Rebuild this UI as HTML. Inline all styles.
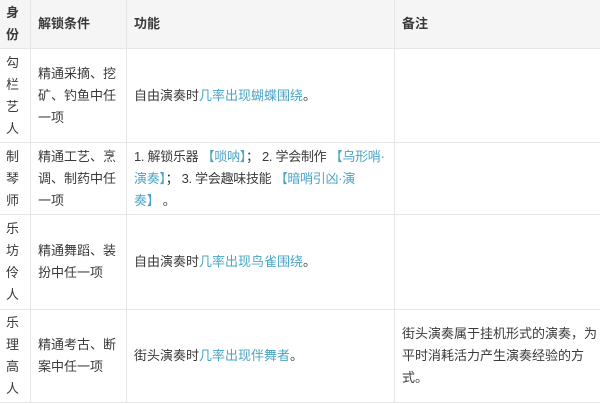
<!DOCTYPE html>
<html><head><meta charset="utf-8"><style>
body{margin:0;width:600px;height:404px;background:#fff;overflow:hidden;font-family:"Liberation Sans","Noto Sans CJK SC",sans-serif;font-size:13px;color:#3a3a3a;line-height:22px}
.c{position:absolute;display:flex;align-items:center;box-sizing:border-box;padding:0 7px;border-right:1px solid #e6e6e6;border-bottom:1px solid #e6e6e6}
.h{background:#f5f5f5;font-weight:bold}
.l{color:#4ba5c6}
.n{white-space:nowrap}
</style></head><body>
<div class="c h" style="left:0;top:0;width:31px;height:49px;padding:0 6px">身份</div>
<div class="c h" style="left:31px;top:0;width:96px;height:49px">解锁条件</div>
<div class="c h" style="left:127px;top:0;width:268px;height:49px">功能</div>
<div class="c h" style="left:395px;top:0;width:205px;height:49px;border-right:0">备注</div>

<div class="c" style="left:0;top:49px;width:31px;height:94px;padding:0 6px">勾栏艺人</div>
<div class="c" style="left:31px;top:49px;width:96px;height:94px">精通采摘、挖矿、钓鱼中任一项</div>
<div class="c" style="left:127px;top:49px;width:268px;height:94px">自由演奏时<span class="l">几率出现蝴蝶围绕</span>。</div>
<div class="c" style="left:395px;top:49px;width:205px;height:94px;border-right:0"></div>

<div class="c" style="left:0;top:143px;width:31px;height:72px;padding:0 6px">制琴师</div>
<div class="c" style="left:31px;top:143px;width:96px;height:72px">精通工艺、烹调、制药中任一项</div>
<div class="c n" style="left:127px;top:143px;width:268px;height:72px;letter-spacing:-0.3px"><div>1. 解锁乐器 <span class="l">【唢呐】</span>； 2. 学会制作 <span class="l">【乌形哨·</span><br><span class="l">演奏】</span>； 3. 学会趣味技能 <span class="l">【暗哨引凶·演</span><br><span class="l">奏】</span> 。</div></div>
<div class="c" style="left:395px;top:143px;width:205px;height:72px;border-right:0"></div>

<div class="c" style="left:0;top:215px;width:31px;height:95px;padding:0 6px">乐坊伶人</div>
<div class="c" style="left:31px;top:215px;width:96px;height:95px">精通舞蹈、装扮中任一项</div>
<div class="c" style="left:127px;top:215px;width:268px;height:95px">自由演奏时<span class="l">几率出现鸟雀围绕</span>。</div>
<div class="c" style="left:395px;top:215px;width:205px;height:95px;border-right:0"></div>

<div class="c" style="left:0;top:310px;width:31px;height:93px;padding:0 6px">乐理高人</div>
<div class="c" style="left:31px;top:310px;width:96px;height:93px">精通考古、断案中任一项</div>
<div class="c" style="left:127px;top:310px;width:268px;height:93px">街头演奏时<span class="l">几率出现伴舞者</span>。</div>
<div class="c n" style="left:395px;top:310px;width:205px;height:93px;border-right:0"><div>街头演奏属于挂机形式的演奏，为<br>平时消耗活力产生演奏经验的方<br>式。</div></div>
</body></html>
